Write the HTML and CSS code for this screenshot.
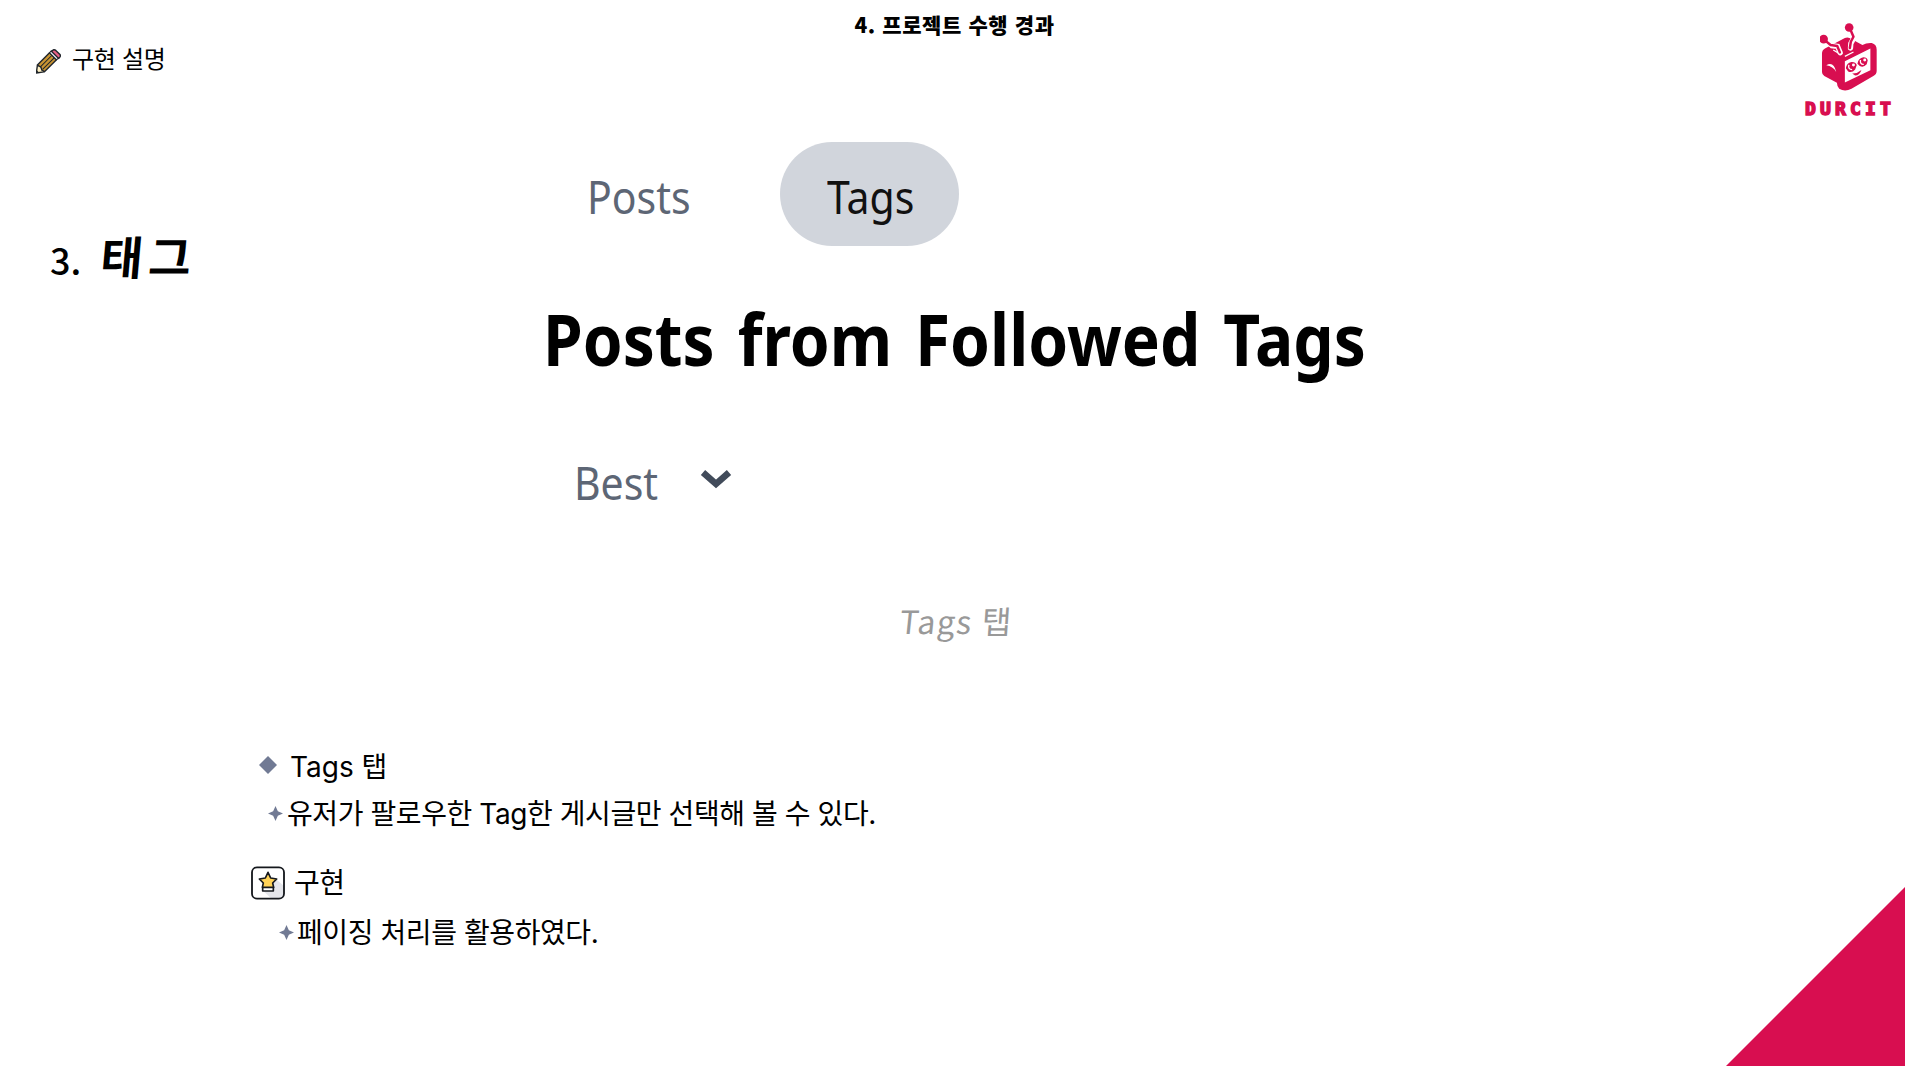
FILE: index.html
```html
<!DOCTYPE html>
<html lang="ko">
<head>
<meta charset="utf-8">
<title>4. 프로젝트 수행 경과</title>
<link rel="stylesheet" href="styles.css">
</head>
<body>
<div class="slide">
  <header class="header">
    <div class="topic">
      <svg class="pencil" viewBox="0 0 72 72" aria-hidden="true">
        <path d="M4 47L1 69 23 66 19 51Z" fill="#fff0c2" stroke="#20252b" stroke-width="4" stroke-linejoin="round"/>
        <path d="M4 46L39 11 59 31 25 65 17 61 14 52Z" fill="#c99432" stroke="#20252b" stroke-width="4" stroke-linejoin="round"/>
        <path d="M12 52L46 18M19 59L53 25" stroke="#20252b" stroke-width="3"/>
        <path d="M39 11L59 31 66 26 44 5Z" fill="#e8eaf2" stroke="#20252b" stroke-width="3"/>
        <path d="M45 7Q51-1 57 4L69 16Q73 21 65 27Z" fill="#e65f84" stroke="#20252b" stroke-width="4"/>
        <path d="M1 69L2 61 9 68Z" fill="#20252b"/>
      </svg>
      <span class="topic-text">구현 설명</span>
    </div>
    <h1 class="title">4. 프로젝트 수행 경과</h1>
    <div class="logo">
      <svg class="robot" viewBox="105 35 175 210" aria-hidden="true">
        <path fill="#d80e50" d="M111 129Q111 119 120 114L180 83Q187 79 194 83L233 104Q245 97 261 98 276 102 276 118V182Q276 192 266 197L200 236Q180 246 163 236 156 228 156 218L118 197Q111 193 111 185Z"/>
        <path fill="#fff" d="M180 153L257 114V180L180 217Z"/>
        <path fill="none" stroke="#fff" stroke-width="4" d="M145 119L167 132M180 138L206 125"/>
        <path fill="#fff" d="M124 165Q146 152 154 185 144 168 124 165Z"/>
        <path fill="none" stroke="#fff" stroke-width="16" stroke-linecap="round" d="M134 99L141 106 158 108 166 127M203 72L207 83 198 99 197 113"/>
        <path fill="none" stroke="#d80e50" stroke-width="7.5" stroke-linecap="round" stroke-linejoin="round" d="M119 89L137 104 157 107 165 126M195 53L206 79 198 94 195 113"/>
        <circle cx="116" cy="86" r="13" fill="#d80e50"/><circle cx="193" cy="51" r="13" fill="#d80e50"/>
        <path fill="#d80e50" d="M183 174Q185 158 200 155 212 154 216 164L211 178Q202 189 190 184ZM218 160Q221 143 236 141 247 141 249 150L246 162Q236 173 225 167Z"/>
        <path fill="none" stroke="#fff" stroke-width="4" d="M192 164Q189 178 202 178M227 149Q225 163 237 162"/>
        <circle cx="206" cy="164" r="4.5" fill="#fff"/><circle cx="240" cy="149" r="4.5" fill="#fff"/>
        <path fill="#d80e50" d="M202 190Q216 191 230 179 225 195 211 196Z"/>
      </svg>
      <span class="brand">DURCIT</span>
    </div>
  </header>

  <main class="content">
    <h2 class="section"><span class="num">3.</span><span class="name">태그</span></h2>
    <figure class="preview">
      <div class="tabs">
        <span class="tab"><span class="fit posts">Posts</span></span>
        <span class="tab active"><span class="fit tags">Tags</span></span>
      </div>
      <h3 class="feed"><span class="fit feed-text">Posts from Followed Tags</span></h3>
      <div class="sort">
        <span class="fit best">Best</span>
        <svg class="chevron" viewBox="0 0 32 20" aria-hidden="true"><path d="M3 3.5L16 15 29 3.5" fill="none" stroke="#414b5a" stroke-width="6.5"/></svg>
      </div>
      <figcaption class="caption"><span class="cap-en">Tags</span><span class="cap-ko">탭</span></figcaption>
    </figure>
  </main>

  <section class="notes">
    <div class="note note-tab">
      <svg class="diamond" viewBox="0 0 18 18" aria-hidden="true"><path d="M9 0L18 9 9 18 0 9Z" fill="#717a94"/></svg>
      <span class="t1">Tags 탭</span>
    </div>
    <div class="note note-follow">
      <svg class="spark" viewBox="0 0 14 14" aria-hidden="true"><path d="M7 0L9.2 4.8 14 7 9.2 9.2 7 14 4.8 9.2 0 7 4.8 4.8Z" fill="#717a94"/></svg>
      <span class="t2">유저가 팔로우한 Tag한 게시글만 선택해 볼 수 있다.</span>
    </div>
    <div class="note note-impl">
      <svg class="star" viewBox="0 0 102 100" aria-hidden="true">
        <rect x="3" y="3" width="96" height="94" rx="15" fill="#fff"/>
        <path d="M77 40L98 58V83Q98 96 84 96H60L36 73Z" fill="#e5e6eb"/>
        <rect x="3" y="3" width="96" height="94" rx="15" fill="none" stroke="#15181d" stroke-width="5.5"/>
        <path d="M35 62H67V74H35Z" fill="#fff" stroke="#15181d" stroke-width="5" stroke-linejoin="round"/>
        <path d="M51 18L59 35 77 38 65 50 68 63H34L37 50 25 38 43 35Z" fill="#ffd257" stroke="#15181d" stroke-width="5" stroke-linejoin="round"/>
      </svg>
      <span class="t3">구현</span>
    </div>
    <div class="note note-paging">
      <svg class="spark" viewBox="0 0 14 14" aria-hidden="true"><path d="M7 0L9.2 4.8 14 7 9.2 9.2 7 14 4.8 9.2 0 7 4.8 4.8Z" fill="#717a94"/></svg>
      <span class="t4">페이징 처리를 활용하였다.</span>
    </div>
  </section>
  <div class="corner"></div>
</div>
</body>
</html>
```
FILE: styles.css
```css
* { box-sizing: border-box; }
body { margin: 0; background: #fff; color: #000; font-family: Inter, "Noto Sans CJK KR", sans-serif; }
h1, h2, h3, figure { margin: 0; }
svg { display: block; flex: none; }
span { white-space: nowrap; }

.slide { position: relative; width: 1905px; height: 1066px; overflow: hidden; display: flex; flex-direction: column; }

.header { height: 122px; display: grid; grid-template-columns: 1fr auto 1fr; align-items: start; }
.topic { display: flex; align-items: center; gap: 11px; padding: 39px 0 0 36px; height: 80px; }
.pencil { width: 25px; height: 25px; margin-top: 3px; }
.topic-text { font-size: 24px; line-height: 36px; letter-spacing: -0.3px; }
.title { padding: 9px 0 0 4px; font: 900 21px/30px "Noto Sans CJK KR", sans-serif; letter-spacing: 0.6px; }
.logo { justify-self: end; display: flex; flex-direction: column; align-items: center; width: 88px; margin: 22px 12px 0 0; }
.robot { width: 58px; height: 70px; }
.brand { margin: 5px -2px 0 0; font: 700 18px/24px "DejaVu Sans Mono", monospace; letter-spacing: 4.2px; color: #d80e50; -webkit-text-stroke: 1.6px #d80e50; }

.content { display: grid; grid-template-columns: 542px 1fr; height: 610px; }
.section { display: flex; align-items: baseline; gap: 20px; padding: 103px 0 0 50px; font: 500 44px/60px "Noto Sans CJK KR", sans-serif; align-self: start; }
.num { font-size: 36px; }
.name { font-weight: 700; font-size: 46px; letter-spacing: 6px; transform: skewX(-5deg); }

.preview { display: flex; flex-direction: column; align-items: flex-start; padding-top: 20px; font-family: "Noto Sans", sans-serif; }
.fit { display: inline-block; transform-origin: 0 50%; }
.tabs { display: flex; height: 104px; font-size: 45px; line-height: 110px; }
.tab { width: 238px; padding-left: 45px; color: #5d6675; }
.tab.active { width: 179px; padding-left: 47px; color: #111; background: #d1d5dc; border-radius: 52px; }
.posts, .tags, .best { transform: scaleX(0.91); }
.feed { margin: 43px 0 0 1px; font-size: 71px; line-height: 100px; word-spacing: 7px; }
.feed-text { transform: scaleX(0.901); }
.sort { display: flex; margin: 64px 0 0 32px; font-size: 45px; line-height: 60px; color: #5d6675; }
.best { width: 126px; }
.chevron { width: 32px; height: 20px; margin-top: 16px; }
.caption { display: flex; gap: 9px; margin: 77px 0 0 358px; font: 400 32px/60px "Noto Sans CJK KR", sans-serif; color: #999; }
.cap-en { transform: skewX(-6deg); letter-spacing: 1.4px; }
.cap-ko { transform: skewX(-4deg); }

.notes { display: flex; flex-direction: column; align-items: flex-start; padding-left: 251px; font-size: 28px; line-height: 40px; }
.note { display: flex; align-items: center; height: 40px; }
.note span { padding-top: 2px; }
.note-tab { margin-top: 13px; padding-left: 8px; gap: 13px; }
.note .t1 { padding-top: 4px; }
.note-follow { margin-top: 8px; padding-left: 17px; gap: 4px; }
.note-impl { margin-top: 30px; gap: 9px; }
.note-paging { margin-top: 9px; padding-left: 28px; gap: 3px; }
.note .t3 { padding-top: 0; letter-spacing: -0.5px; }
.t2, .t4 { letter-spacing: -0.42px; }
.diamond { width: 18px; height: 18px; }
.spark { width: 15px; height: 15px; }
.star { width: 34px; height: 34px; }

.corner { position: absolute; right: 0; bottom: 0; width: 179px; height: 179px; background: #d80e50; clip-path: polygon(100% 0, 100% 100%, 0 100%); }
```
